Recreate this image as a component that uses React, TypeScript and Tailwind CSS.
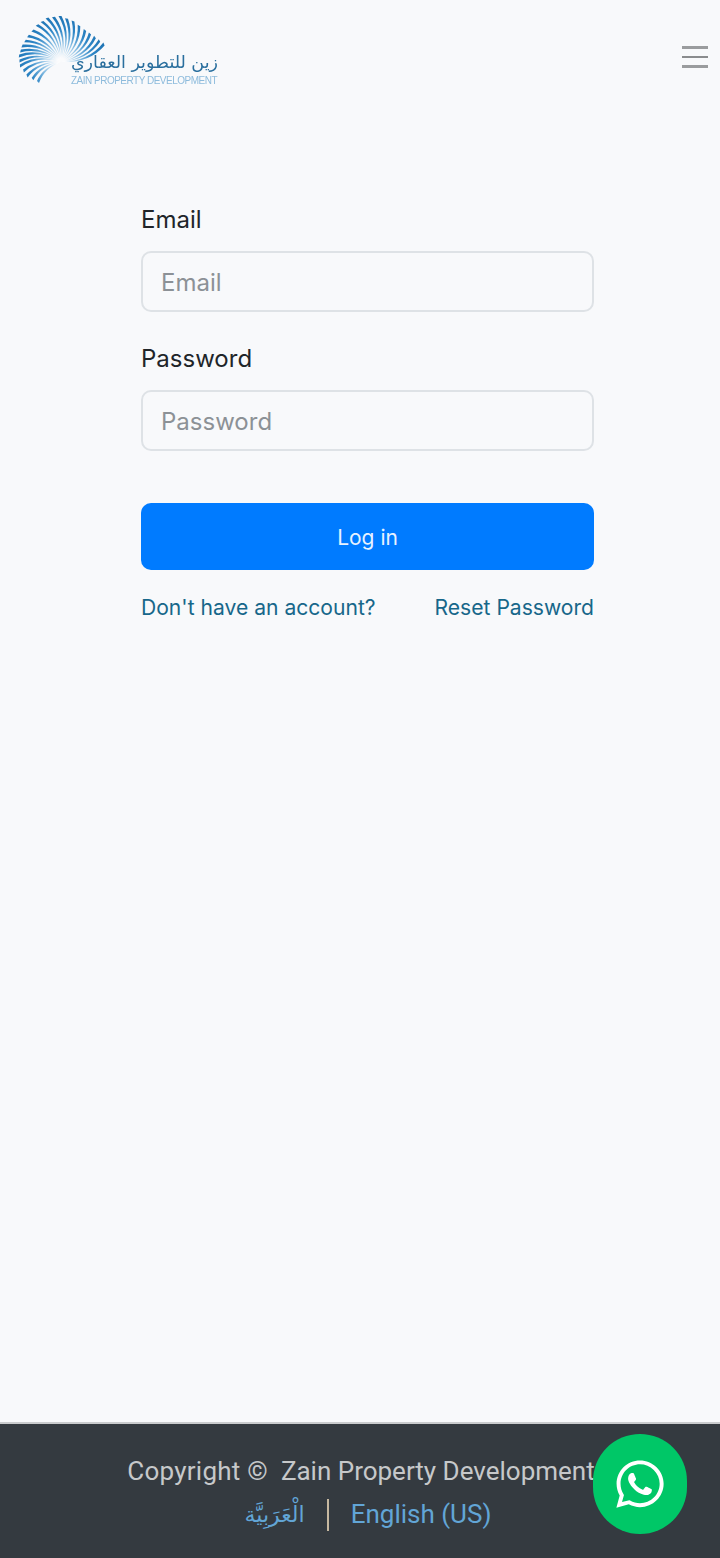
import { FaWhatsapp } from 'react-icons/fa';

const FOCUS = [61, 62];
// blade tips, left/bottom round to the right, in page pixels
const TIPS = [
  [38, 82], [27, 76], [20, 66], [19, 56], [22, 46], [28, 36], [37, 25],
  [47, 18], [60, 16], [73, 21], [85, 30], [95, 37], [104, 44],
];

function bladePath(tx: number, ty: number) {
  const [fx, fy] = FOCUS;
  const dx = tx - fx;
  const dy = ty - fy;
  const len = Math.hypot(dx, dy);
  const nx = dy / len;
  const ny = -dx / len;
  const mx = fx + dx * 0.55 - nx * len * 0.24;
  const my = fy + dy * 0.55 - ny * len * 0.24;
  const w = 1.5;
  return `M${fx} ${fy}Q${(mx - nx * 0.8).toFixed(1)} ${(my - ny * 0.8).toFixed(1)} ${(tx - nx * w).toFixed(1)} ${(ty - ny * w).toFixed(1)}L${(tx + nx * w).toFixed(1)} ${(ty + ny * w).toFixed(1)}Q${(mx + nx * 0.8).toFixed(1)} ${(my + ny * 0.8).toFixed(1)} ${fx} ${fy}Z`;
}

// Swirl mark: curved blades fanning out of one focus point
function LogoMark() {
  const blades: string[] = [];
  TIPS.forEach(([x, y], i) => {
    blades.push(bladePath(x, y));
    const next = TIPS[i + 1];
    if (next) blades.push(bladePath((x + next[0]) / 2, (y + next[1]) / 2));
  });
  return (
    <svg viewBox="0 0 110 90" className="absolute left-[-18px] top-[-12px] h-[90px] w-[110px]">
      <defs>
        <radialGradient id="blade" gradientUnits="userSpaceOnUse" cx={FOCUS[0]} cy={FOCUS[1]} r="46">
          <stop offset="0.08" stopColor="#ffffff" />
          <stop offset="0.4" stopColor="#8cc0e4" />
          <stop offset="0.7" stopColor="#2e86c6" />
          <stop offset="1" stopColor="#1f74b4" />
        </radialGradient>
      </defs>
      {blades.map((d, i) => (
        <path key={i} d={d} fill="url(#blade)" />
      ))}
    </svg>
  );
}

function Field({ label }: { label: string }) {
  return (
    <div>
      <label className="mb-[12px] block pt-[1px] text-[24px] leading-[38px] text-[#212529]">{label}</label>
      <input
        placeholder={label}
        className="block h-[61px] w-full rounded-[10px] border-2 border-[#dee2e6] bg-[#f8f9fb] px-[18px] pt-[2px] text-[24px] text-[#212529] outline-none placeholder:text-[#8c9196]"
      />
    </div>
  );
}

export default function App() {
  return (
    <div className="flex min-h-screen w-full flex-col bg-[#f8f9fb] font-['Inter',sans-serif]">
      <header className="flex h-[100px] items-start justify-between pl-[18px] pr-[12px] pt-[12px]">
        <a href="#" className="relative block h-[78px] w-[200px] blur-[0.5px]">
          <LogoMark />
          <div dir="rtl" className="absolute right-0 top-[37px] whitespace-nowrap font-['DejaVu_Sans',sans-serif] text-[17.5px] leading-[26px] text-[#2a6f9e]">
            زين للتطوير العقاري
          </div>
          <div className="absolute right-[1px] top-[63px] whitespace-nowrap font-['Liberation_Sans',sans-serif] text-[10px] leading-[12px] tracking-[-0.5px] text-[#8dbbdc]">
            ZAIN PROPERTY DEVELOPMENT
          </div>
        </a>
        <button aria-label="menu" className="mt-[34px] flex w-[26px] flex-col gap-[7px]">
          <span className="block h-[2.5px] bg-[#9a9c9e]" />
          <span className="block h-[2.5px] bg-[#8a8c8e]" />
          <span className="block h-[2.5px] bg-[#9a9c9e]" />
        </button>
      </header>

      <main className="flex-1 pt-[100px]">
        <form className="ml-[141px] w-[453px]">
          <div className="flex flex-col gap-[27px]">
            <Field label="Email" />
            <Field label="Password" />
          </div>
          <button type="button" className="mt-[52px] h-[67px] w-full rounded-[10px] bg-[#007bff] pt-[2px] text-[21px] text-[#e8f2ff]">
            Log in
          </button>
          <div className="mt-[20px] flex justify-between text-[21.1px] leading-[36px] text-[#17678a]">
            <a href="#">Don't have an account?</a>
            <a href="#">Reset Password</a>
          </div>
        </form>
      </main>

      <footer className="relative h-[136px] border-t-2 border-[#c9cbcd] bg-[#343a40] pt-[26px] text-center font-['Roboto',sans-serif] text-[26px] leading-[43px]">
        <div className="whitespace-pre pl-[2px] text-[#c6c8ca]">
          <span className="tracking-[0.25px]">Copyright ©</span>  Zain Property Development
        </div>
        <div className="flex items-center justify-center gap-[22px] pl-[16px] text-[#62a5d6]">
          <a href="#" dir="rtl" className="font-['DejaVu_Sans',sans-serif] text-[22px]">الْعَرَبِيَّة</a>
          <span className="h-[32px] w-[2px] bg-[#c6b8a0]" />
          <a href="#">English (US)</a>
        </div>
        <a href="#" aria-label="WhatsApp" className="absolute left-[593px] top-[10px] flex h-[100px] w-[94px] items-center justify-center rounded-full bg-[#00c767] text-white">
          <FaWhatsapp className="h-[54px] w-[54px]" />
        </a>
      </footer>
    </div>
  );
}
